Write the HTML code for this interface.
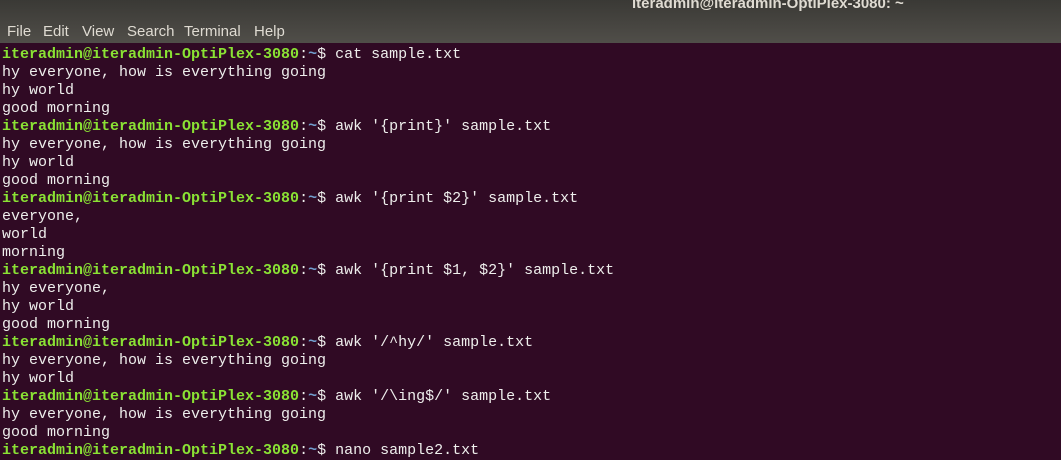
<!DOCTYPE html>
<html><head><meta charset="utf-8"><style>
html,body{margin:0;padding:0;width:1061px;height:448px;overflow:hidden;background:#300a24}
#top{position:absolute;left:0;top:0;width:1061px;height:43px;background:linear-gradient(#3a3935,#504e49)}
#title{position:absolute;left:632px;top:-5px;width:300px;font:bold 15px "Liberation Sans",sans-serif;color:#dfdbd2;white-space:nowrap}
#menu span{position:absolute;top:23px;font:15px "Liberation Sans",sans-serif;color:#dfdbd2;white-space:nowrap}
#term{position:absolute;left:2px;top:46px;font:15px/18px "Liberation Mono",monospace;color:#eeeeec;white-space:pre}
.g{color:#8ae234;font-weight:bold}.b{color:#729fcf;font-weight:bold}
</style></head><body>
<div id="top"><div id="title">iteradmin@iteradmin-OptiPlex-3080: ~</div>
<div id="menu"><span style="left:7px">File</span><span style="left:43px">Edit</span><span style="left:82px">View</span><span style="left:127px">Search</span><span style="left:184px">Terminal</span><span style="left:254px">Help</span></div></div>
<div id="term"><span class="g">iteradmin@iteradmin-OptiPlex-3080</span>:<span class="b">~</span>$ cat sample.txt
hy everyone, how is everything going
hy world
good morning
<span class="g">iteradmin@iteradmin-OptiPlex-3080</span>:<span class="b">~</span>$ awk '{print}' sample.txt
hy everyone, how is everything going
hy world
good morning
<span class="g">iteradmin@iteradmin-OptiPlex-3080</span>:<span class="b">~</span>$ awk '{print $2}' sample.txt
everyone,
world
morning
<span class="g">iteradmin@iteradmin-OptiPlex-3080</span>:<span class="b">~</span>$ awk '{print $1, $2}' sample.txt
hy everyone,
hy world
good morning
<span class="g">iteradmin@iteradmin-OptiPlex-3080</span>:<span class="b">~</span>$ awk '/^hy/' sample.txt
hy everyone, how is everything going
hy world
<span class="g">iteradmin@iteradmin-OptiPlex-3080</span>:<span class="b">~</span>$ awk '/\ing$/' sample.txt
hy everyone, how is everything going
good morning
<span class="g">iteradmin@iteradmin-OptiPlex-3080</span>:<span class="b">~</span>$ nano sample2.txt</div>
</body></html>
